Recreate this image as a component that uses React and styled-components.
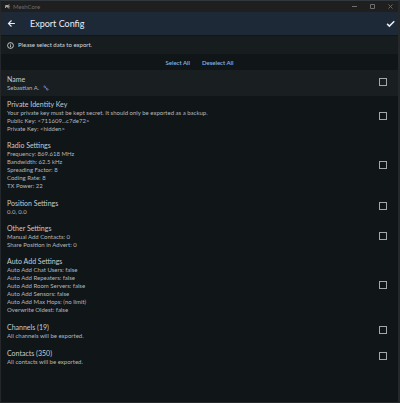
import React, { useState } from "react";
import styled, { createGlobalStyle } from "styled-components";

const GlobalStyle = createGlobalStyle`
  *, *::before, *::after { box-sizing: border-box; }
  body {
    margin: 0;
    background: #101518;
    color: #b4b8bb;
    font: 6px/8px Lato, "Noto Sans", sans-serif;
  }
`;

const Window = styled.div`
  display: flex;
  flex-direction: column;
  min-height: 100vh;
  border: 1px solid #24282b;
  border-top-color: #30383e;
  border-right-width: 2px;
  background: #101518;
`;

const TitleBar = styled.div`
  display: flex;
  align-items: center;
  gap: 3px;
  height: 11px;
  padding: 0 5px 0 4px;
  background: #1f1f1f;
  color: #6c6e70;
`;

const AppName = styled.span`
  flex: 1;
`;

const WindowControls = styled.div`
  display: flex;
  gap: 13px;
`;

const PlainButton = styled.button`
  display: grid;
  place-items: center;
  padding: 0;
  border: 0;
  background: none;
  color: inherit;
  cursor: pointer;
  svg { display: block; }
`;

const AppBar = styled.header`
  display: flex;
  align-items: center;
  gap: 14px;
  height: 23px;
  padding: 0 3px 0 6px;
  background: #1e2938;
  color: #eaedf0;
`;

const Title = styled.h1`
  flex: 1;
  margin: 0;
  font-size: 9px;
  line-height: 12px;
  font-weight: 400;
`;

const Notice = styled.div`
  display: flex;
  align-items: center;
  gap: 4px;
  height: 18px;
  margin-top: 1px;
  padding: 0 6px;
  background: #171c1f;
  color: #d6d9db;
`;

const Actions = styled.div`
  display: flex;
  justify-content: center;
  gap: 12px;
  padding: 5px 0 3px;
`;

const TextButton = styled(PlainButton)`
  color: #83b5ea;
  font-family: inherit;
  font-size: 6px;
  line-height: 8px;
  font-weight: 600;
`;

const Row = styled.label`
  display: flex;
  align-items: center;
  justify-content: space-between;
  min-height: 26px;
  padding: 4px 11px 4px 6px;
  background: ${({ $active }) => ($active ? "#191e21" : "transparent")};
  cursor: pointer;
`;

const Heading = styled.div`
  color: #c8cbcd;
  font-size: 7px;
  line-height: 9px;
`;

const Line = styled.div`
  display: flex;
  align-items: center;
  gap: 4px;
`;

const Checkbox = styled.input`
  appearance: none;
  width: 8px;
  height: 8px;
  margin: 0 0 2px;
  border: 1px solid #a4a7a9;
  background: transparent;
  &:checked { background: #83b5ea; }
`;

const Satellite = () => (
  <svg width="6" height="6" viewBox="0 0 12 12" aria-hidden="true">
    <path d="M0 3 3 0l4 4-3 3zM5 9l3-4 4 4-3 3z" fill="#4c51a0" />
    <path d="m4 4 4 4" stroke="#777c9e" strokeWidth="2" />
  </svg>
);

const sections = [
  { title: "Name", lines: ["Sebastian A."], active: true, icon: true },
  {
    title: "Private Identity Key",
    lines: [
      "Your private key must be kept secret. It should only be exported as a backup.",
      "Public Key: <711609...c7de72>",
      "Private Key: <hidden>",
    ],
  },
  {
    title: "Radio Settings",
    lines: ["Frequency: 869.618 MHz", "Bandwidth: 62.5 kHz", "Spreading Factor: 8", "Coding Rate: 8", "TX Power: 22"],
  },
  { title: "Position Settings", lines: ["0.0, 0.0"] },
  { title: "Other Settings", lines: ["Manual Add Contacts: 0", "Share Position in Advert: 0"] },
  {
    title: "Auto Add Settings",
    lines: [
      "Auto Add Chat Users: false",
      "Auto Add Repeaters: false",
      "Auto Add Room Servers: false",
      "Auto Add Sensors: false",
      "Auto Add Max Hops: (no limit)",
      "Overwrite Oldest: false",
    ],
  },
  { title: "Channels (19)", lines: ["All channels will be exported."] },
  { title: "Contacts (350)", lines: ["All contacts will be exported."] },
];

export default function App() {
  const [selected, setSelected] = useState([]);
  const toggle = (title) =>
    setSelected((now) => (now.includes(title) ? now.filter((t) => t !== title) : [...now, title]));

  return (
    <>
      <GlobalStyle />
      <Window>
        <TitleBar>
          <svg width="5" height="5" viewBox="0 0 10 8" aria-hidden="true">
            <path d="M1 7 2 1l2 4 2-4v6M7 1h2M7 4h2M7 7h2" fill="none" stroke="#b5b5b5" strokeWidth="2" />
          </svg>
          <AppName>MeshCore</AppName>
          <WindowControls>
            <PlainButton aria-label="Minimize">
              <svg width="5" height="5" viewBox="0 0 5 5"><path d="M0 2.5h5" stroke="currentColor" /></svg>
            </PlainButton>
            <PlainButton aria-label="Maximize">
              <svg width="5" height="5" viewBox="0 0 5 5"><path d="M.5.5h4v4h-4z" fill="none" stroke="currentColor" /></svg>
            </PlainButton>
            <PlainButton aria-label="Close">
              <svg width="5" height="5" viewBox="0 0 5 5"><path d="m.5.5 4 4m0-4-4 4" stroke="currentColor" strokeWidth=".9" /></svg>
            </PlainButton>
          </WindowControls>
        </TitleBar>
        <AppBar>
          <PlainButton aria-label="Back">
            <svg width="9" height="9" viewBox="0 0 24 24">
              <path d="M21 12H5M12 4l-8 8 8 8" fill="none" stroke="currentColor" strokeWidth="3" />
            </svg>
          </PlainButton>
          <Title>Export Config</Title>
          <PlainButton aria-label="Confirm export">
            <svg width="9" height="9" viewBox="0 0 24 24">
              <path d="m3 13 6 6L22 6" fill="none" stroke="currentColor" strokeWidth="4" />
            </svg>
          </PlainButton>
        </AppBar>
        <Notice>
          <svg width="7" height="7" viewBox="0 0 24 24" aria-hidden="true">
            <circle cx="12" cy="12" r="10" fill="none" stroke="currentColor" strokeWidth="3" />
            <path d="M12 6v3m0 2v7" stroke="currentColor" strokeWidth="3" />
          </svg>
          Please select data to export.
        </Notice>
        <Actions>
          <TextButton onClick={() => setSelected(sections.map((s) => s.title))}>Select All</TextButton>
          <TextButton onClick={() => setSelected([])}>Deselect All</TextButton>
        </Actions>
        <main>
          {sections.map(({ title, lines, active, icon }) => (
            <Row key={title} $active={active}>
              <div>
                <Heading>{title}</Heading>
                {lines.map((line) => (
                  <Line key={line}>
                    {line}
                    {icon && <Satellite />}
                  </Line>
                ))}
              </div>
              <Checkbox type="checkbox" checked={selected.includes(title)} onChange={() => toggle(title)} />
            </Row>
          ))}
        </main>
      </Window>
    </>
  );
}
